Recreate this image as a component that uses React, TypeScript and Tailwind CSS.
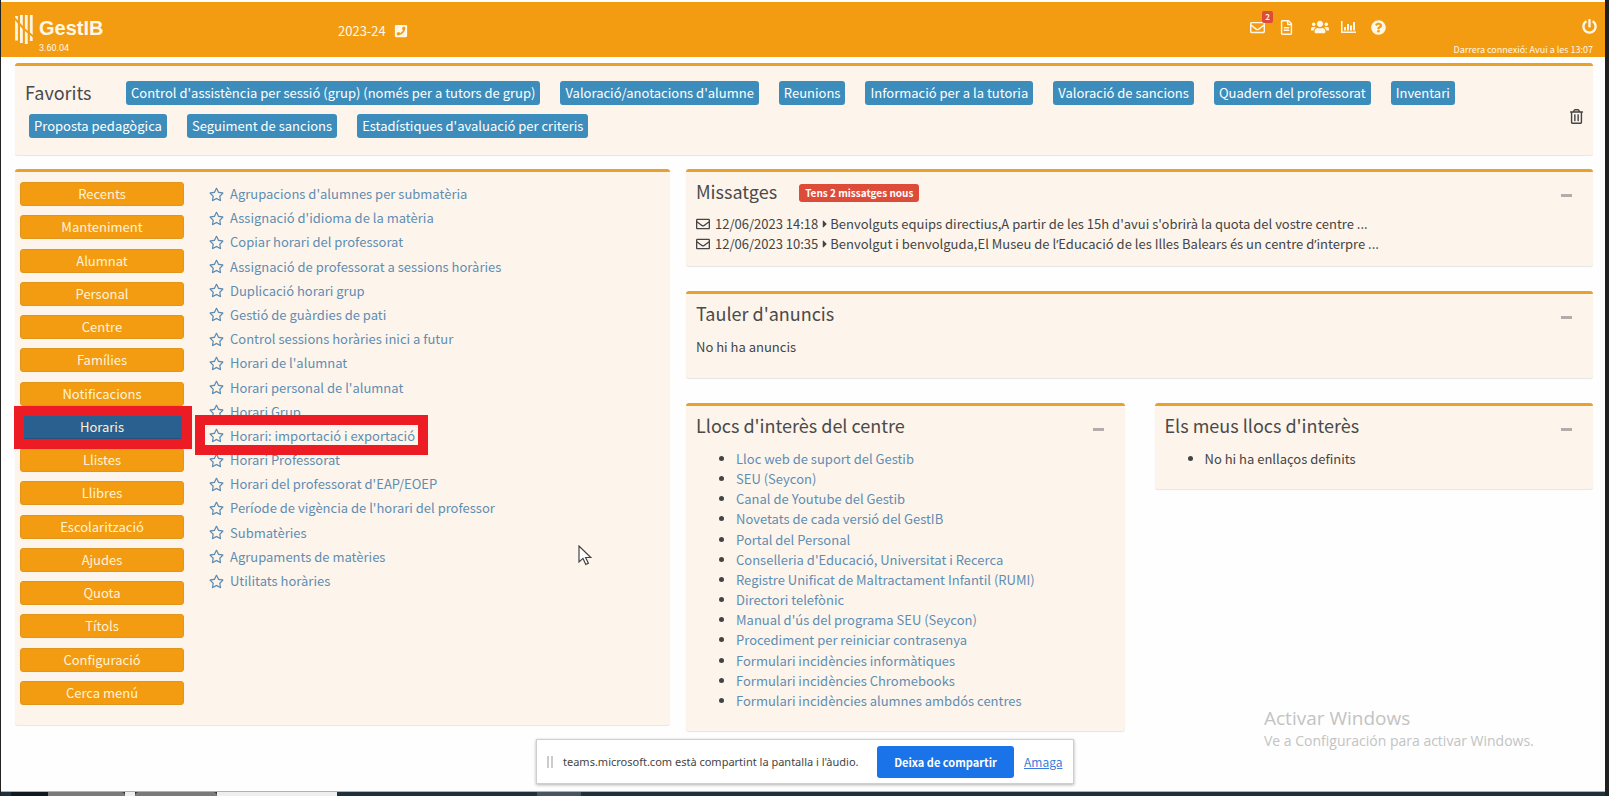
import React from "react";
import {
  FaCaretRight,
  FaPhoneSquare,
  FaPowerOff,
  FaQuestionCircle,
  FaRegEnvelope,
  FaRegFileAlt,
  FaRegStar,
  FaRegTrashAlt,
  FaUsers,
} from "react-icons/fa";

const favorites = [
  "Control d'assistència per sessió (grup) (només per a tutors de grup)",
  "Valoració/anotacions d'alumne",
  "Reunions",
  "Informació per a la tutoria",
  "Valoració de sancions",
  "Quadern del professorat",
  "Inventari",
  "Proposta pedagògica",
  "Seguiment de sancions",
  "Estadístiques d'avaluació per criteris",
];

const menu = [
  "Recents",
  "Manteniment",
  "Alumnat",
  "Personal",
  "Centre",
  "Famílies",
  "Notificacions",
  "Horaris",
  "Llistes",
  "Llibres",
  "Escolarització",
  "Ajudes",
  "Quota",
  "Títols",
  "Configuració",
  "Cerca menú",
];

const options = [
  "Agrupacions d'alumnes per submatèria",
  "Assignació d'idioma de la matèria",
  "Copiar horari del professorat",
  "Assignació de professorat a sessions horàries",
  "Duplicació horari grup",
  "Gestió de guàrdies de pati",
  "Control sessions horàries inici a futur",
  "Horari de l'alumnat",
  "Horari personal de l'alumnat",
  "Horari Grup",
  "Horari: importació i exportació",
  "Horari Professorat",
  "Horari del professorat d'EAP/EOEP",
  "Període de vigència de l'horari del professor",
  "Submatèries",
  "Agrupaments de matèries",
  "Utilitats horàries",
];

const messages = [
  ["12/06/2023 14:18", "Benvolguts equips directius,A partir de les 15h d'avui s'obrirà la quota del vostre centre ..."],
  ["12/06/2023 10:35", "Benvolgut i benvolguda,El Museu de l’Educació de les Illes Balears és un centre d’interpre ..."],
];

const places = [
  "Lloc web de suport del Gestib",
  "SEU (Seycon)",
  "Canal de Youtube del Gestib",
  "Novetats de cada versió del GestIB",
  "Portal del Personal",
  "Conselleria d'Educació, Universitat i Recerca",
  "Registre Unificat de Maltractament Infantil (RUMI)",
  "Directori telefònic",
  "Manual d'ús del programa SEU (Seycon)",
  "Procediment per reiniciar contrasenya",
  "Formulari incidències informàtiques",
  "Formulari incidències Chromebooks",
  "Formulari incidències alumnes ambdós centres",
];

const panel = "rounded-[3px] border-t-3 border-t-[#e8a22c] bg-[#fdf5ec] shadow-[0_1px_1px_rgba(0,0,0,0.1)]";

function Logo() {
  return (
    <svg width="18" height="29" viewBox="0 0 18 29" fill="none" aria-hidden="true">
      <path d="M1.5 1v24.500M6.4 0v28M11.3 0v29M16.3 0v26" stroke="#fff6df" strokeWidth="2.8" />
      <path d="M-1 2.500L9 14l10 8" stroke="#f39c12" strokeWidth="2" />
    </svg>
  );
}

function BarChart() {
  return (
    <svg width="15" height="12" viewBox="0 0 15 12" fill="currentColor" aria-hidden="true">
      <path d="M0 0h1.500v10.500H15V12H0zM3 6h2v3.500H3zM6 3h2v6.500H6zM9 4.500h2v5H9zM12 1h2v8.500h-2z" />
    </svg>
  );
}

/* The CJK family draws ’ full width, so the apostrophe takes a Latin face. */
function Curly({ text }: { text: string }) {
  return (
    <>
      {text.split("’").map((part, i) => (
        <React.Fragment key={i}>
          {i > 0 && <span className="font-['Open_Sans',sans-serif]">’</span>}
          {part}
        </React.Fragment>
      ))}
    </>
  );
}

function PanelHead({ title, children }: { title: string; children?: React.ReactNode }) {
  return (
    <div className="flex items-center">
      <h2 className="text-[18px] leading-[20px] text-[#4a4a4a]">{title}</h2>
      {children}
      <button type="button" aria-label={"Replega " + title} className="mt-2 mr-[11px] ml-auto flex h-3 w-[11px] items-center">
        <span className="h-[3px] w-full bg-[#b3acab]" />
      </button>
    </div>
  );
}

function Header() {
  return (
    <header className="relative flex h-[55px] bg-[#f39c12] pl-[14px] text-[#fff8e6]">
      <div className="flex w-[323px] pt-[13px]">
        <Logo />
        <div className="pl-[6px]">
          <div className="font-['Liberation_Sans',sans-serif] text-[20px] leading-[26px] font-bold">GestIB</div>
          <div className="font-[Roboto,sans-serif] text-[9px] leading-[14px]">3.60.04</div>
        </div>
      </div>
      <div className="flex h-[58px] items-center gap-2">
        <span>2023-24</span>
        <FaPhoneSquare size={14} />
      </div>
      <nav aria-label="Accessos" className="mt-4 ml-auto flex h-[18px] items-center text-[15px]">
        <a href="#missatges" aria-label="Missatges" className="relative mr-[14px]">
          <FaRegEnvelope />
          <span className="absolute -top-[9px] left-3 h-3 w-[11px] rounded-[2px] bg-[#dd4b39] text-center text-[8px] leading-[12px] font-bold">2</span>
        </a>
        <a href="#documents" aria-label="Documents" className="mr-[17px]"><FaRegFileAlt size={15} /></a>
        <a href="#grups" aria-label="Grups" className="mr-[12px]"><FaUsers size={18} /></a>
        <a href="#grafics" aria-label="Gràfics" className="mr-[15px]"><BarChart /></a>
        <a href="#ajuda" aria-label="Ajuda"><FaQuestionCircle size={15} /></a>
      </nav>
      <div className="flex w-[219px] flex-col items-end pt-[17px] pr-2">
        <button type="button" aria-label="Surt"><FaPowerOff size={15} /></button>
        <span className="pt-[9px] pr-1 text-[9px] leading-[14px]">Darrera connexió: Avui a les 13:07</span>
      </div>
    </header>
  );
}

export default function App() {
  return (
    <div className="relative min-h-screen overflow-hidden border-r-4 border-l border-r-[#202020] border-l-[#222] bg-[#fefefe] pt-[2px] font-['Noto_Sans_CJK_SC',sans-serif] text-[13px] leading-[20px] text-[#444]">
      <Header />

      <main className="px-[14px] pr-3">
        <section className={panel + " mt-[6px] flex h-[92px] items-center"}>
          <div className="flex h-full flex-1 flex-wrap content-start gap-x-5 gap-y-[9px] pt-[15px] pl-[10px]">
            <h2 className="w-[81px] text-[18px] leading-[22px] text-[#4a4a4a]">Favorits</h2>
            {favorites.map((f, i) => (
              <a key={f} href="#favorit" className={(i === 7 ? "ml-1 " : "") + "h-6 rounded-[3px] bg-[#3c8dbc] px-[5px] leading-[24px] text-white"}>
                {f}
              </a>
            ))}
          </div>
          <button type="button" aria-label="Esborra favorits" className="mt-3 mr-[9px] text-[#444]"><FaRegTrashAlt size={15} /></button>
        </section>

        <div className="mt-[14px] flex items-start gap-4">
          <section className={panel + " flex h-[556px] w-[655px] pt-[10px] pl-[5px]"}>
            <nav aria-label="Menú" className="flex h-[523px] w-[164px] flex-col justify-between">
              {menu.map((m) => (
                <button
                  key={m}
                  type="button"
                  className={
                    "h-6 rounded-[3px] border text-center leading-[22px] text-[#fff3d6] " +
                    (m === "Horaris" ? "border-[#23527c] bg-[#2a6090]" : "border-[#e0961d] bg-[#f39c12]")
                  }
                >
                  {m}
                </button>
              ))}
            </nav>
            <ul className="ml-[25px] flex h-[411px] flex-col justify-between">
              {options.map((o) => (
                <li key={o} className="flex h-6 items-center gap-[6px] text-[#5f8db2]">
                  <FaRegStar size={15} />
                  <a href="#opcio">{o}</a>
                </li>
              ))}
            </ul>
          </section>

          <div className="min-w-0 flex-1">
            <section id="missatges" className={panel + " h-[97px] px-[10px] pt-[9px]"}>
              <PanelHead title="Missatges">
                <span className="-mb-1 ml-[22px] rounded-[3px] bg-[#dd4b39] px-[6px] text-[10px] leading-[18px] font-bold text-white">Tens 2 missatges nous</span>
              </PanelHead>
              <ul className="mt-[13px]">
                {messages.map(([date, text]) => (
                  <li key={date} className="flex h-5 items-center">
                    <FaRegEnvelope size={14} />
                    <span className="pl-[5px]">{date}</span>
                    <FaCaretRight size={12} className="-mr-px ml-px" />
                    <a href="#missatge"><Curly text={text} /></a>
                  </li>
                ))}
              </ul>
            </section>

            <section className={panel + " mt-[25px] h-[87px] px-[10px] pt-[9px]"}>
              <PanelHead title="Tauler d'anuncis" />
              <p className="mt-[14px]">No hi ha anuncis</p>
            </section>

            <div className="mt-[25px] flex items-start gap-[30px]">
              <section className={panel + " h-[328px] flex-1 px-[10px] pt-[9px]"}>
                <PanelHead title="Llocs d'interès del centre" />
                <ul className="mt-[14px] flex h-[262px] list-disc flex-col justify-between pl-10">
                  {places.map((p) => (
                    <li key={p}><a href="#lloc" className="text-[#5f8db2]">{p}</a></li>
                  ))}
                </ul>
              </section>
              <section className={panel + " h-[86px] flex-1 px-[10px] pt-[9px]"}>
                <PanelHead title="Els meus llocs d'interès" />
                <ul className="mt-[14px] list-disc pl-10">
                  <li>No hi ha enllaços definits</li>
                </ul>
              </section>
            </div>
          </div>
        </div>
      </main>

      <div className="pointer-events-none absolute top-[406px] left-[13px] h-[43px] w-[178px] border-10 border-[#ed1c24]" />
      <div className="pointer-events-none absolute top-[415px] left-[194px] h-[40px] w-[233px] border-10 border-[#ed1c24]" />

      <svg className="absolute top-[545px] left-[577px]" width="14" height="22" viewBox="0 0 14 22" aria-hidden="true">
        <path d="M1 1v16l4-3.600 2.800 6 2.600-1.100-2.800-5.800h5.200z" fill="#fff" stroke="#444" strokeWidth="1.2" />
      </svg>

      <div className="absolute top-[706px] left-[1263px] font-['Open_Sans',sans-serif] text-[#c3c3c3]">
        <div className="text-[19px] leading-[25px]">Activar Windows</div>
        <div className="text-[14px] leading-[20px]">Ve a Configuración para activar Windows.</div>
      </div>

      <div className="absolute top-[739px] left-[535px] flex h-[45px] w-[538px] items-center border border-[#cfcfcf] bg-white pl-[10px] text-[12px] shadow-[0_1px_3px_rgba(0,0,0,0.3)]">
        <span className="h-3 w-[6px] border-x-2 border-[#ccc]" />
        <span className="w-[324px] pl-[10px] font-['Noto_Sans',sans-serif] text-[11px] whitespace-nowrap">teams.microsoft.com està compartint la pantalla i l'àudio.</span>
        <button type="button" className="h-8 w-[137px] rounded-[3px] bg-[#1a73e8] text-[11px] font-bold text-white">Deixa de compartir</button>
        <a href="#amaga" className="ml-[10px] text-[#3b7ddd] underline">Amaga</a>
      </div>

      <div className="absolute inset-x-0 bottom-0 flex h-[5px] border-t border-[#a5b4bb] bg-[#1f303d]">
        <span className="ml-[10px] w-[37px] bg-[#101820]" />
        <span className="w-[77px] rounded-tr-[4px] bg-[#7a7a7a]" />
        <span className="w-[10px] bg-[#eee]" />
        <span className="w-[82px] rounded-t-[4px] bg-[#7a7a7a]" />
        <span className="w-[120px] bg-[#eee]" />
        <span className="ml-[200px] w-[44px] bg-[#47555f]" />
      </div>
    </div>
  );
}
